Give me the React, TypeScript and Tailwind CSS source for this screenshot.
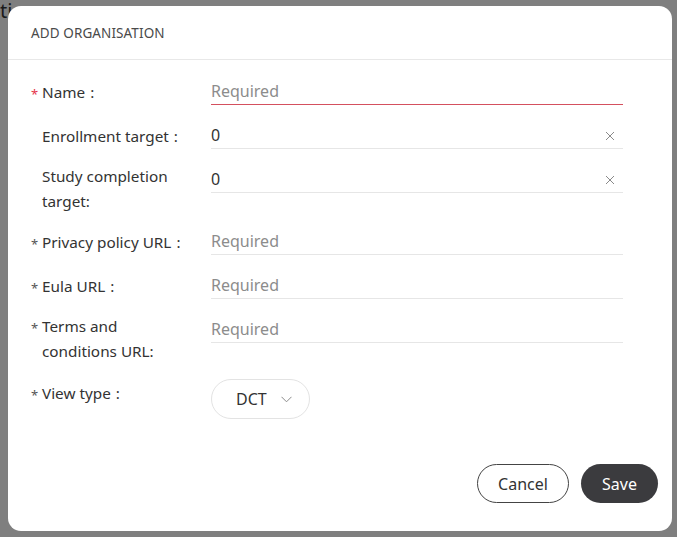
import React from "react";

function ClearIcon() {
  return (
    <svg width="10" height="10" viewBox="0 0 10 10" className="shrink-0">
      <path d="M1 1 L9 9 M9 1 L1 9" stroke="#8a8a8a" strokeWidth="1" fill="none" />
    </svg>
  );
}

function Chevron() {
  return (
    <svg width="11" height="7" viewBox="0 0 11 7">
      <path d="M0.5 0.8 L5.5 5.8 L10.5 0.8" stroke="#8a8a8a" strokeWidth="1" fill="none" />
    </svg>
  );
}

type RowProps = {
  required?: boolean;
  red?: boolean;
  multi?: boolean;
  label: React.ReactNode;
  children: React.ReactNode;
};

function Row({ required, red, multi, label, children }: RowProps) {
  return (
    <div className="flex items-start mb-3 min-h-[32px]">
      <div className={"w-[180px] shrink-0 flex items-start " + (multi ? "mt-[-3px] mb-[3px]" : "mt-[1px]")}>
        <div className="w-[11px] shrink-0 h-[25px] flex items-center">
          {required && (
            <span className={"text-[13px] leading-none mt-[3px] " + (red ? "text-[#e5344a]" : "text-[#555]")}>*</span>
          )}
        </div>
        <div className="text-[15.3px] leading-[25px] text-[#333]">{label}</div>
      </div>
      <div className="flex-1">{children}</div>
    </div>
  );
}

function TextInput({ placeholder, value, red, clear }: { placeholder?: string; value?: string; red?: boolean; clear?: boolean }) {
  return (
    <div
      className={
        "h-[26px] flex items-start justify-between border-b " +
        (red ? "border-[#d4505e]" : "border-[#e6e6e6]")
      }
    >
      <span className={"text-[16px] leading-[25px] " + (value ? "text-[#333]" : "text-[#8c8c8c]")}>
        {value ?? placeholder}
      </span>
      {clear && (
        <span className="mr-[8px] h-[25px] flex items-center">
          <ClearIcon />
        </span>
      )}
    </div>
  );
}

export default function App() {
  return (
    <div className="relative w-[677px] h-[537px] overflow-hidden bg-[#7f7f7f]" style={{ fontFamily: '"Noto Sans", "Open Sans", sans-serif' }}>
      <div className="absolute left-0 top-[-1px] text-[20px] leading-[24px] text-[#1a1a1a]">tion</div>
      <div className="absolute left-[8px] top-[6px] w-[664px] h-[525px] bg-white rounded-[13px] flex flex-col">
        <div className="h-[54px] flex items-center px-[23px] border-b border-[#e8e8e8]">
          <span className="text-[13.5px] text-[#4a4a4a] tracking-[0.1px] mt-[1px]">ADD ORGANISATION</span>
        </div>
        <div className="pt-[19px] pl-[23px] pr-[49px]">
          <Row required red label={<>Name<span className="ml-[5px]">:</span></>}>
            <TextInput placeholder="Required" red />
          </Row>
          <Row label={<>Enrollment target<span className="ml-[5px]">:</span></>}>
            <TextInput value="0" clear />
          </Row>
          <Row multi label={<>Study completion<br />target:</>}>
            <TextInput value="0" clear />
          </Row>
          <Row required label={<>Privacy policy URL<span className="ml-[5px]">:</span></>}>
            <TextInput placeholder="Required" />
          </Row>
          <Row required label={<>Eula URL<span className="ml-[5px]">:</span></>}>
            <TextInput placeholder="Required" />
          </Row>
          <Row required multi label={<>Terms and<br />conditions URL:</>}>
            <TextInput placeholder="Required" />
          </Row>
          <div className="flex items-start">
            <div className="w-[180px] shrink-0 flex items-start pt-[2px]">
              <div className="w-[11px] shrink-0 h-[25px] flex items-center">
                <span className="text-[13px] leading-none mt-[3px] text-[#555]">*</span>
              </div>
              <div className="text-[15.3px] leading-[25px] text-[#333]">View type<span className="ml-[5px]">:</span></div>
            </div>
            <div className="flex-1">
              <div className="w-[99px] h-[40px] rounded-full border border-[#e3e3e3] flex items-center pl-[24px] gap-[14px]">
                <span className="text-[16px] text-[#333]">DCT</span>
                <Chevron />
              </div>
            </div>
          </div>
        </div>
        <div className="mt-auto flex justify-end gap-[12px] pr-[14px] pb-[28px]">
          <button className="w-[92px] h-[39px] rounded-full border border-[#444] bg-white text-[16px] text-[#333]">Cancel</button>
          <button className="w-[77px] h-[39px] rounded-full bg-[#3b3b3e] text-[16px] text-white">Save</button>
        </div>
      </div>
    </div>
  );
}
